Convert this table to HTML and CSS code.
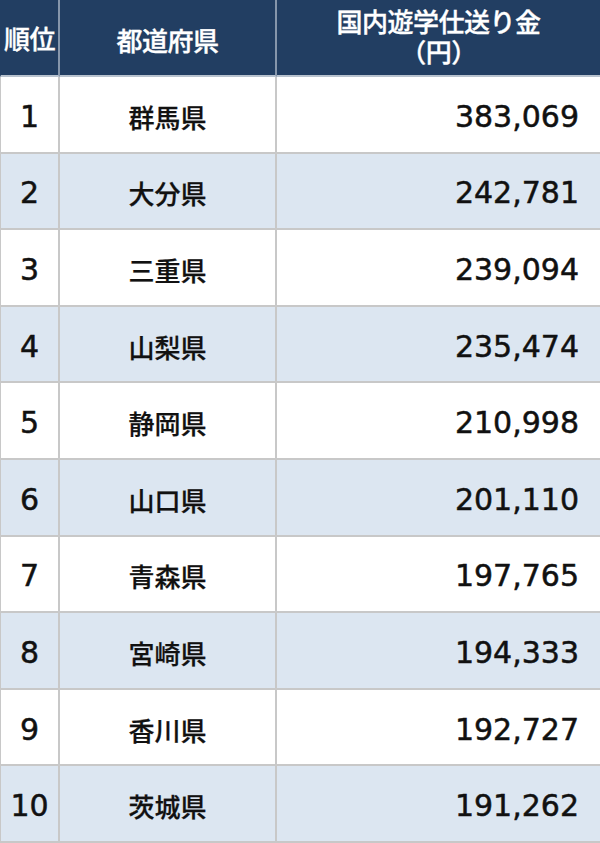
FILE: index.html
```html
<!DOCTYPE html>
<html lang="ja">
<head>
<meta charset="utf-8">
<link rel="stylesheet" href="styles.css">
</head>
<body>
<div class="table">
  <div class="cell head rank">順位</div>
  <div class="cell head pref">都道府県</div>
  <div class="cell head amount-h"><span class="hl">国内遊学仕送り金</span><span class="hl">（円）</span></div>

  <div class="cell rank num">1</div><div class="cell pref">群馬県</div><div class="cell amount">383,069</div>
  <div class="cell rank num alt">2</div><div class="cell pref alt">大分県</div><div class="cell amount alt">242,781</div>
  <div class="cell rank num">3</div><div class="cell pref">三重県</div><div class="cell amount">239,094</div>
  <div class="cell rank num alt">4</div><div class="cell pref alt">山梨県</div><div class="cell amount alt">235,474</div>
  <div class="cell rank num">5</div><div class="cell pref">静岡県</div><div class="cell amount">210,998</div>
  <div class="cell rank num alt">6</div><div class="cell pref alt">山口県</div><div class="cell amount alt">201,110</div>
  <div class="cell rank num">7</div><div class="cell pref">青森県</div><div class="cell amount">197,765</div>
  <div class="cell rank num alt">8</div><div class="cell pref alt">宮崎県</div><div class="cell amount alt">194,333</div>
  <div class="cell rank num">9</div><div class="cell pref">香川県</div><div class="cell amount">192,727</div>
  <div class="cell rank num alt">10</div><div class="cell pref alt">茨城県</div><div class="cell amount alt">191,262</div>
</div>
</body>
</html>
```
FILE: styles.css
```css
html, body {
  margin: 0;
  padding: 0;
  background: #ffffff;
}
.table {
  width: 600px;
  height: 843px;
  display: grid;
  grid-template-columns: 60px 217px 1fr;
  grid-template-rows: 77px repeat(10, 1fr);
  font-family: "Noto Sans CJK JP", "Noto Sans", sans-serif;
  color: #111111;
  box-sizing: border-box;
}
.cell {
  display: flex;
  align-items: center;
  justify-content: center;
  border-right: 2px solid #c8c8c8;
  border-bottom: 2px solid #c8c8c8;
  font-size: 26px;
  font-weight: 500;
  -webkit-text-stroke: 0.25px #111111;
  box-sizing: border-box;
  background: #ffffff;
}
.rank {
  border-left: 1px solid #c8c8c8;
}
.head {
  background: #223e62;
  color: #ffffff;
  -webkit-text-stroke: 0.35px #ffffff;
  border-right-color: #8696ab;
  border-bottom-color: #b8c2ce;
  letter-spacing: -0.5px;
}
.head.rank {
  border-left-color: #223e62;
}
.amount-h {
  border-right: none;
  flex-direction: column;
  gap: 0;
  padding-bottom: 4px;
}
.hl {
  display: block;
  line-height: 30px;
  height: 30px;
}
.num {
  font-family: "DejaVu Sans", "Noto Sans", sans-serif;
  font-weight: 400;
  font-size: 30px;
  -webkit-text-stroke: 0.5px #111111;
}
.pref {
  padding-top: 4px;
}
.amount {
  border-right: none;
  justify-content: flex-end;
  padding-right: 21px;
  padding-top: 4px;
  font-family: "DejaVu Sans", "Noto Sans", sans-serif;
  font-weight: 400;
  font-size: 30px;
  -webkit-text-stroke: 0.5px #111111;
}
.rank.num {
  padding-top: 4px;
}
.alt {
  background: #dce6f1;
}
```
